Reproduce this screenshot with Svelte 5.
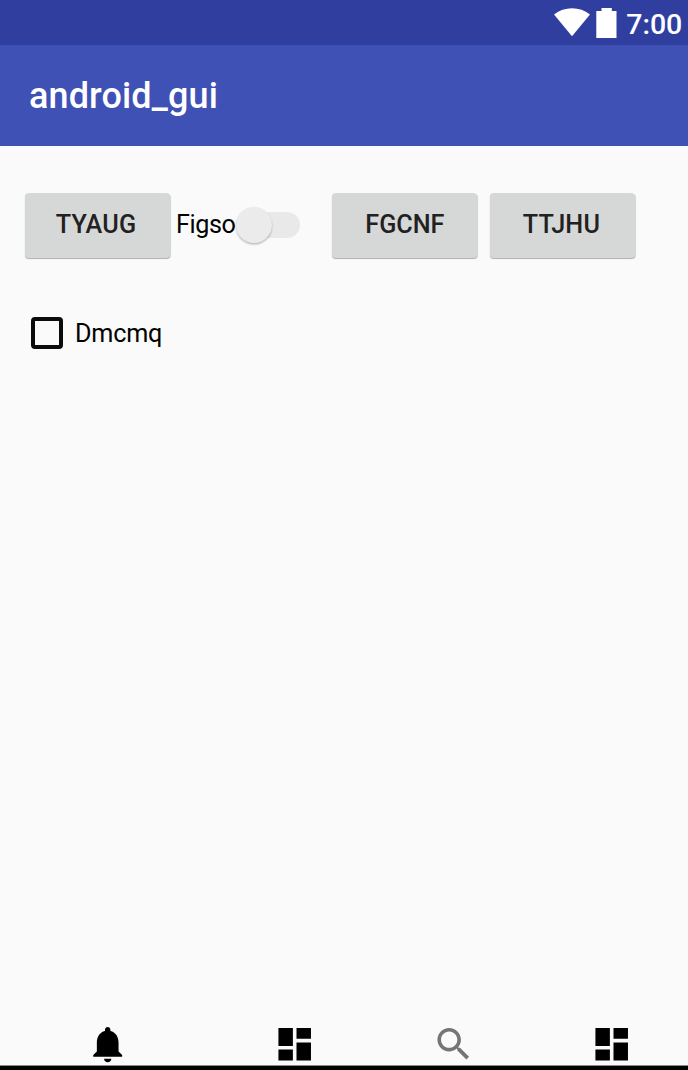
<script>
  const dashboard = 'M3 13h8V3H3v10zm0 8h8v-6H3v6zm10 0h8V11h-8v10zm0-18v6h8V3h-8z';
  const bell = 'M12 22c1.1 0 2-.9 2-2h-4c0 1.1.89 2 2 2zm6-6v-5c0-3.07-1.64-5.64-4.5-6.32V4c0-.83-.67-1.5-1.5-1.5s-1.5.67-1.5 1.5v.68C7.63 5.36 6 7.92 6 11v5l-2 2v1h16v-1l-2-2z';
  const search = 'M15.5 14h-.79l-.28-.27C15.41 12.59 16 11.11 16 9.5 16 5.91 13.09 3 9.5 3S3 5.91 3 9.5 5.91 16 9.5 16c1.61 0 3.09-.59 4.23-1.57l.27.28v.79l5 4.99L20.49 19l-4.99-5zm-6 0C7.01 14 5 11.99 5 9.5S7.01 5 9.5 5 14 7.01 14 9.5 11.99 14 9.5 14z';
  let on = $state(false);
  let checked = $state(false);
</script>

<div class="screen">
  <header class="status">
    <svg class="wifi" width="36" height="29" viewBox="0 0 36 29"><path d="M0 6.5Q8 0.2 18 0.2T36 6.5L18 28.2Z" fill="#fff" /></svg>
    <svg class="battery" width="21" height="30" viewBox="0 0 21 30"><path d="M5.5 0h10.3v3h4.7v27H.3V3h5.2z" fill="#fff" /></svg>
    <span class="clock">7:00</span>
  </header>
  <div class="appbar"><h1>android_gui</h1></div>
  <main>
    <div class="row">
      <button class="btn wide">TYAUG</button>
      <button class="switch" role="switch" aria-checked={on} onclick={() => (on = !on)}>
        <span class="label">Figso</span>
        <span class="track"><span class="thumb" class:on></span></span>
      </button>
      <button class="btn third">FGCNF</button>
      <button class="btn wide fourth">TTJHU</button>
    </div>
    <button class="check" role="checkbox" aria-checked={checked} onclick={() => (checked = !checked)}>
      <span class="box" class:checked></span>
      <span class="caption">Dmcmq</span>
    </button>
  </main>
  <nav>
    <svg class="bell" viewBox="0 0 24 24"><path d={bell} /></svg>
    <svg class="dash" viewBox="0 0 24 24"><path d={dashboard} /></svg>
    <svg class="search" viewBox="0 0 24 24"><path d={search} /></svg>
    <svg class="dash2" viewBox="0 0 24 24"><path d={dashboard} /></svg>
  </nav>
</div>

<style>
  :global(body) { margin: 0; }
  .screen {
    width: 688px; height: 1070px; box-sizing: border-box; overflow: hidden;
    display: flex; flex-direction: column; background: #fafafa;
    font-family: Roboto, sans-serif; border-bottom: 4px solid #000;
  }
  .status { height: 45px; flex: none; display: flex; background: #303f9f; color: #fff; }
  .wifi { margin: 8px 0 0 553.7px; }
  .battery { margin: 8px 0 0 6px; }
  .clock { margin-left: 9.5px; font-size: 28.5px; line-height: 49px; font-weight: 500; white-space: nowrap; }
  .appbar { height: 101px; flex: none; display: flex; align-items: center; padding-left: 29px; background: #3f51b5; color: #fff; }
  h1 { margin: 0; font-size: 36px; font-weight: 500; line-height: 42px; letter-spacing: .12px; }
  main { flex: 1; padding: 47px 0 0 25px; }
  button { border: 0; padding: 0; margin: 0; font-family: inherit; font-size: 25.2px; text-align: center; background: none; }
  .row { display: flex; height: 65px; }
  .btn { width: 145px; height: 65px; box-sizing: border-box; border-radius: 4px; background: #d6d7d7; color: #212121; font-weight: 500; box-shadow: 0 1px 1px rgba(0, 0, 0, .18), .5px 1px 1px rgba(0, 0, 0, .14); line-height: 63px; padding-bottom: 2px; }
  .wide { letter-spacing: .2px; padding-right: 3px; }
  .switch { display: flex; align-items: center; margin-left: 6px; width: 125px; height: 63px; color: #000; }
  .label { width: 60px; text-align: left; letter-spacing: -.4px; }
  .track { width: 64px; height: 26px; border-radius: 13px; background: #e9e9e9; display: flex; align-items: center; }
  .thumb { width: 36px; height: 36px; flex: none; border-radius: 50%; background: #ebebeb; box-shadow: 0 1.5px 2px rgba(0, 0, 0, .26); }
  .thumb.on { margin-left: 28px; }
  .third { margin-left: 31.4px; }
  .fourth { margin-left: 13px; }
  .check { display: flex; align-items: center; margin: 59px 0 0 5.5px; height: 32px; color: #000; }
  .box { width: 32.5px; height: 32.5px; box-sizing: border-box; border: 4px solid #0b0b0b; border-radius: 4px; }
  .box.checked { background: #000; }
  .caption { margin-left: 12px; letter-spacing: -.2px; }
  nav { height: 43px; flex: none; display: flex; border-bottom: 1px solid #8a8a8a; }
  nav svg { width: 43.4px; height: 43.4px; flex: none; fill: #000; transform: translateY(.5px); }
  .bell { margin-left: 86.4px; }
  .dash { margin-left: 143.6px; }
  nav .search { margin-left: 115px; fill: #757575; }
  .dash2 { margin-left: 115px; }
</style>
